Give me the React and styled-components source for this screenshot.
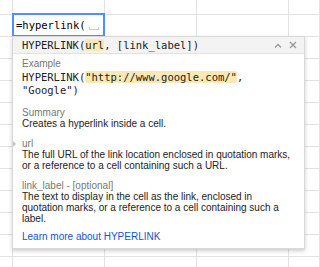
import React from 'react';
import styled, { createGlobalStyle } from 'styled-components';

const GlobalStyle = createGlobalStyle`
    html, body {
        margin: 0;
        padding: 0;
        background: #fff;
        overflow: hidden;
    }
    body {
        font-family: "Liberation Sans", Arial, sans-serif;
    }
`;

const Sheet = styled.div`
    position: relative;
    width: 320px;
    height: 267px;
    overflow: hidden;
`;

const Grid = styled.div`
    display: grid;
    grid-template-columns: 13px 92px 92px 92px 1fr;
    grid-template-rows: 15px repeat(12, 22px);
`;

const Cell = styled.div`
    box-sizing: border-box;
    border-right: 1px solid #e2e2e2;
    border-bottom: 1px solid #e2e2e2;
`;

const Editor = styled.div`
    position: absolute;
    left: 12px;
    top: 13px;
    width: 93px;
    height: 24px;
    box-sizing: border-box;
    border: 2px solid #4d90fe;
    background: #fff;
    display: flex;
    align-items: center;
    padding-left: 2px;
    font-family: "DejaVu Sans Mono", monospace;
    font-size: 10.5px;
    color: #000;
    z-index: 2;
`;

const Hint = styled.span`
    display: inline-block;
    width: 8px;
    height: 2px;
    margin: 6px 0 0 3px;
    border: 1px solid #c8c8c8;
    border-top: none;
`;

const Popup = styled.div`
    position: absolute;
    left: 12px;
    top: 36px;
    width: 293px;
    box-sizing: border-box;
    background: #fff;
    border: 1px solid #d8d8d8;
    box-shadow: 0 2px 4px rgba(0, 0, 0, 0.2);
    z-index: 3;
`;

const Header = styled.div`
    height: 16px;
    display: flex;
    align-items: center;
    padding: 0 0 0 9px;
    background: #f3f3f3;
    border-bottom: 1px solid #e3e3e3;
`;

const Signature = styled.div`
    flex: 1;
    font-family: "DejaVu Sans Mono", monospace;
    font-size: 10.5px;
    color: #222;
    white-space: nowrap;
`;

const Mark = styled.span`
    background: #fce8b2;
    border-radius: 2px;
`;

const Tools = styled.div`
    display: flex;
    align-items: center;
    gap: 7px;
    padding-right: 7px;
`;

const Body = styled.div`
    padding: 4px 9px 6px 9px;
`;

const Section = styled.div`
    position: relative;
    margin-bottom: ${p => p.$gap || 9}px;
`;

const Label = styled.div`
    font-size: 10px;
    line-height: 11px;
    color: #777;
`;

const Text = styled.div`
    font-size: 10px;
    line-height: 11px;
    color: #222;
`;

const Code = styled.div`
    font-family: "DejaVu Sans Mono", monospace;
    font-size: 10.5px;
    line-height: 13px;
    color: #222;
    margin-top: 2px;
`;

const Arrow = styled.span`
    position: absolute;
    left: -9px;
    top: 3px;
    width: 0;
    height: 0;
    border-top: 3px solid transparent;
    border-bottom: 3px solid transparent;
    border-left: 3px solid #c4c4c4;
`;

const Link = styled.a`
    font-size: 10px;
    line-height: 11px;
    color: #1155cc;
    text-decoration: none;
    display: block;
`;

const Caret = () => (
    <svg width="8" height="5" viewBox="0 0 8 5">
        <path d="M1 4.5 L4 1.5 L7 4.5" fill="none" stroke="#9a9a9a" strokeWidth="1.4" />
    </svg>
);

const Close = () => (
    <svg width="8" height="8" viewBox="0 0 8 8">
        <path d="M1 1 L7 7 M7 1 L1 7" fill="none" stroke="#9a9a9a" strokeWidth="1.4" />
    </svg>
);

export default function App() {
    const cells = [];
    for (let i = 0; i < 13 * 5; i++) cells.push(<Cell key={i} />);

    return (
        <Sheet>
            <GlobalStyle />
            <Grid>{cells}</Grid>
            <Editor>
                =hyperlink(<Hint />
            </Editor>
            <Popup>
                <Header>
                    <Signature>
                        HYPERLINK(<Mark>url</Mark>, [link_label])
                    </Signature>
                    <Tools>
                        <Caret />
                        <Close />
                    </Tools>
                </Header>
                <Body>
                    <Section $gap={10}>
                        <Label>Example</Label>
                        <Code>
                            HYPERLINK(<Mark>"http://www.google.com/"</Mark>,<br />"Google")
                        </Code>
                    </Section>
                    <Section>
                        <Label>Summary</Label>
                        <Text>Creates a hyperlink inside a cell.</Text>
                    </Section>
                    <Section>
                        <Arrow />
                        <Label>url</Label>
                        <Text>
                            The full URL of the link location enclosed in quotation marks,
                            or a reference to a cell containing such a URL.
                        </Text>
                    </Section>
                    <Section $gap={7}>
                        <Label>link_label - [optional]</Label>
                        <Text>
                            The text to display in the cell as the link, enclosed in
                            quotation marks, or a reference to a cell containing such a
                            label.
                        </Text>
                    </Section>
                    <Link href="#">Learn more about HYPERLINK</Link>
                </Body>
            </Popup>
        </Sheet>
    );
}
